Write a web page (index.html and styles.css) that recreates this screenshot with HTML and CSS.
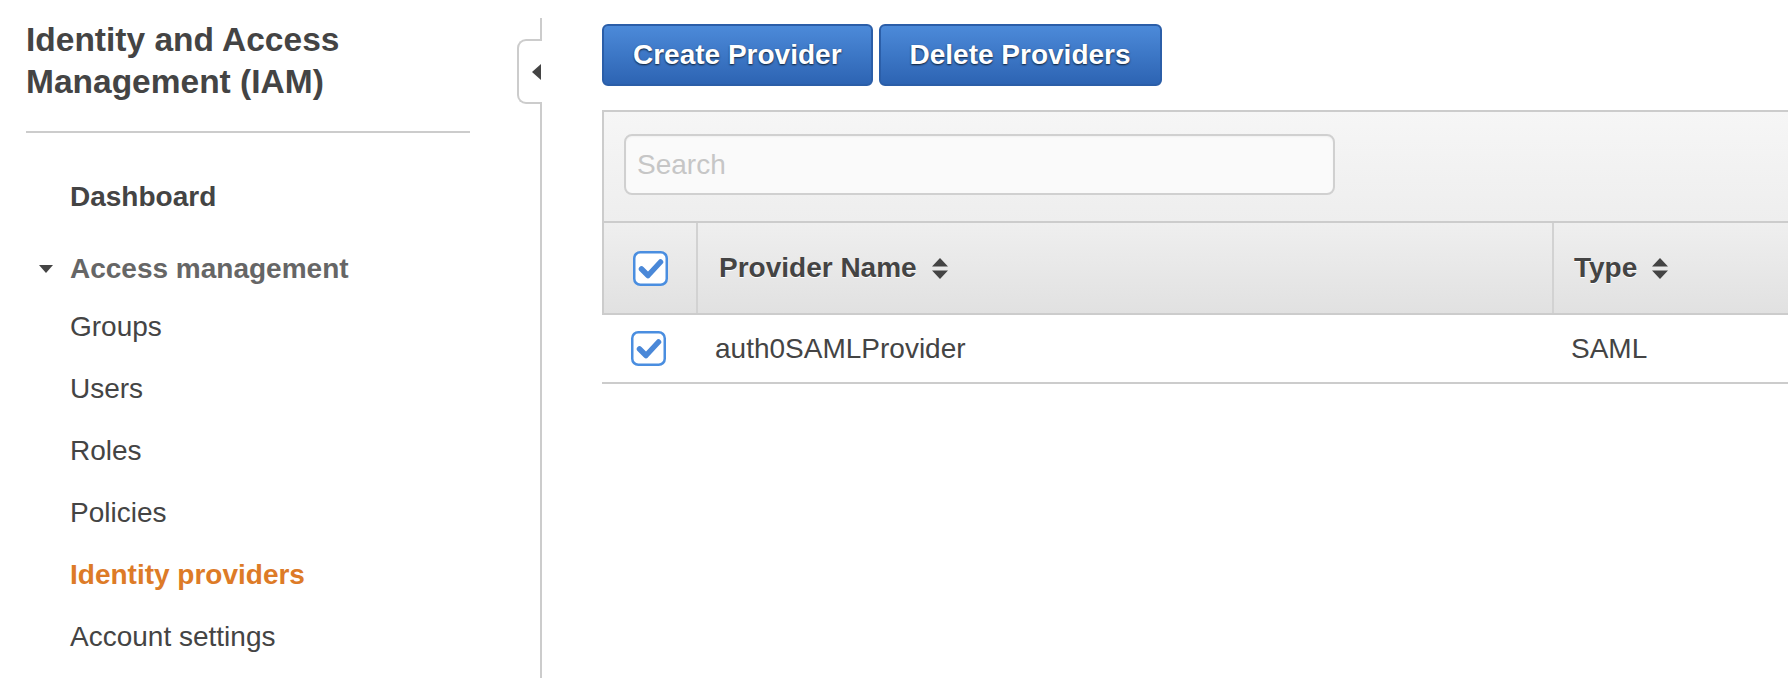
FILE: index.html
```html
<!DOCTYPE html>
<html lang="en">
<head>
<meta charset="utf-8">
<title>IAM - Identity providers</title>
<link rel="stylesheet" href="styles.css">
</head>
<body>
<div class="page">
  <aside class="sidebar">
    <h1 class="title">Identity and Access Management (IAM)</h1>
    <hr class="divider">
    <ul class="nav">
      <li class="nav-item nav-dashboard">Dashboard</li>
      <li class="nav-item nav-section"><span class="caret"></span>Access management</li>
      <li class="nav-item">Groups</li>
      <li class="nav-item">Users</li>
      <li class="nav-item">Roles</li>
      <li class="nav-item">Policies</li>
      <li class="nav-item active">Identity providers</li>
      <li class="nav-item">Account settings</li>
    </ul>
  </aside>
  <div class="rule">
    <div class="collapse-tab"><span class="tab-arrow"></span></div>
  </div>
  <main class="main">
    <div class="actions">
      <button class="btn">Create Provider</button>
      <button class="btn">Delete Providers</button>
    </div>
    <div class="panel">
      <div class="panel-head">
        <div class="toolbar">
          <input class="search" type="text" placeholder="Search">
        </div>
        <div class="thead">
          <div class="th th-check">
            <svg class="cb" width="35" height="35" viewBox="0 0 35 35"><rect x="1.25" y="1.25" width="32.5" height="32.5" rx="6" fill="#fff" stroke="#4a8ee0" stroke-width="2.5"/><polyline points="8.5,18 15,24.5 27.5,11" fill="none" stroke="#4a88d8" stroke-width="5.5" stroke-linecap="round" stroke-linejoin="round"/></svg>
          </div>
          <div class="th th-name">Provider Name<svg class="sort" width="16" height="21" viewBox="0 0 16 21"><path d="M8 0 L16 8.5 L0 8.5 Z M0 12.5 L16 12.5 L8 21 Z" fill="#444"/></svg></div>
          <div class="th th-type">Type<svg class="sort" width="16" height="21" viewBox="0 0 16 21"><path d="M8 0 L16 8.5 L0 8.5 Z M0 12.5 L16 12.5 L8 21 Z" fill="#444"/></svg></div>
        </div>
      </div>
      <div class="tr">
        <div class="td td-check">
          <svg class="cb" width="35" height="35" viewBox="0 0 35 35"><rect x="1.25" y="1.25" width="32.5" height="32.5" rx="6" fill="#fff" stroke="#4a8ee0" stroke-width="2.5"/><polyline points="8.5,18 15,24.5 27.5,11" fill="none" stroke="#4a88d8" stroke-width="5.5" stroke-linecap="round" stroke-linejoin="round"/></svg>
        </div>
        <div class="td td-name">auth0SAMLProvider</div>
        <div class="td td-type">SAML</div>
      </div>
    </div>
  </main>
</div>
</body>
</html>
```
FILE: styles.css
```css
* { box-sizing: border-box; }

body {
  margin: 0;
  font-family: "Liberation Sans", Arial, Helvetica, sans-serif;
  color: #444;
  background: #fff;
  overflow: hidden;
}

.page {
  display: flex;
  min-height: 100vh;
}

/* Sidebar */
.sidebar {
  width: 540px;
  flex: none;
  padding: 19px 0 0 26px;
}

.title {
  margin: 0;
  width: 444px;
  font-size: 33.5px;
  line-height: 42px;
  font-weight: bold;
  color: #444;
}

.divider {
  width: 444px;
  height: 2px;
  margin: 28px 0 0;
  border: 0;
  background: #cccccc;
}

.nav {
  list-style: none;
  margin: 33px 0 0;
  padding: 0 0 0 44px;
}

.nav-item {
  font-size: 28px;
  line-height: 62px;
  height: 62px;
  white-space: nowrap;
  color: #444;
}

.nav-dashboard {
  font-weight: bold;
  margin-bottom: 10px;
}

.nav-section {
  font-weight: bold;
  color: #666;
  margin-bottom: -4px;
}

.caret {
  display: inline-block;
  width: 0;
  height: 0;
  border-left: 7px solid transparent;
  border-right: 7px solid transparent;
  border-top: 8px solid #444;
  vertical-align: middle;
  margin-left: -31px;
  margin-right: 17px;
  position: relative;
  top: -2px;
}

.nav-item.active {
  color: #dd7b27;
  font-weight: bold;
}

/* Vertical rule with collapse tab */
.rule {
  width: 2px;
  flex: none;
  margin-top: 18px;
  background: #cccccc;
  position: relative;
}

.collapse-tab {
  position: absolute;
  top: 21px;
  left: -23px;
  width: 25px;
  height: 65px;
  background: #fff;
  border: 2px solid #cccccc;
  border-right: 0;
  border-radius: 9px 0 0 9px;
  display: flex;
  align-items: center;
  justify-content: flex-end;
  padding-right: 1px;
}

.tab-arrow {
  width: 0;
  height: 0;
  border-top: 8px solid transparent;
  border-bottom: 8px solid transparent;
  border-right: 9px solid #444;
}

/* Main */
.main {
  flex: 1;
  min-width: 0;
  padding: 24px 0 0 60px;
}

.actions {
  display: flex;
  gap: 6px;
}

.btn {
  height: 62px;
  padding: 0 29px;
  border: 2px solid #2b5ea8;
  border-radius: 6px;
  background: linear-gradient(#4c8ad9, #2d64b3);
  color: #fff;
  font-family: "Liberation Sans", Arial, Helvetica, sans-serif;
  font-size: 28px;
  font-weight: bold;
  line-height: 58px;
  text-shadow: 0 1px 2px rgba(0, 0, 0, 0.75);
  cursor: pointer;
}

.panel {
  margin-top: 24px;
}

.panel-head {
  border-top: 2px solid #cccccc;
  border-left: 2px solid #cccccc;
}

.toolbar {
  padding: 22px 20px 26px;
  background: linear-gradient(#f6f6f6, #eeeeee);
}

.search {
  display: block;
  width: 711px;
  height: 61px;
  padding: 0 11px;
  border: 2px solid #d0d0d0;
  border-radius: 8px;
  background: #fafafa;
  box-shadow: inset 0 1px 2px rgba(0, 0, 0, 0.04);
  font-family: "Liberation Sans", Arial, Helvetica, sans-serif;
  font-size: 28px;
  color: #444;
  outline: none;
}

.search::placeholder {
  color: #c6c6c6;
}

.thead {
  display: flex;
  height: 94px;
  border-top: 2px solid #cccccc;
  border-bottom: 2px solid #cccccc;
  background: linear-gradient(#efefef, #e1e1e1);
  font-size: 28px;
  font-weight: bold;
  text-shadow: 0 1px 0 #fff;
}

.th {
  display: flex;
  align-items: center;
}

.th-check {
  width: 94px;
  justify-content: center;
  border-right: 2px solid #d2d2d2;
}

.th-name {
  width: 856px;
  padding-left: 21px;
  border-right: 2px solid #d2d2d2;
}

.th-type {
  flex: 1;
  padding-left: 20px;
}

.sort {
  margin-left: 15px;
  flex: none;
}

.cb {
  display: block;
  flex: none;
}

.tr {
  display: flex;
  height: 69px;
  border-bottom: 2px solid #cccccc;
  font-size: 28px;
}

.td {
  display: flex;
  align-items: center;
}

.td-check {
  width: 93px;
  justify-content: center;
}

.td-name {
  width: 859px;
  padding-left: 20px;
}

.td-type {
  flex: 1;
  padding-left: 17px;
}
```
